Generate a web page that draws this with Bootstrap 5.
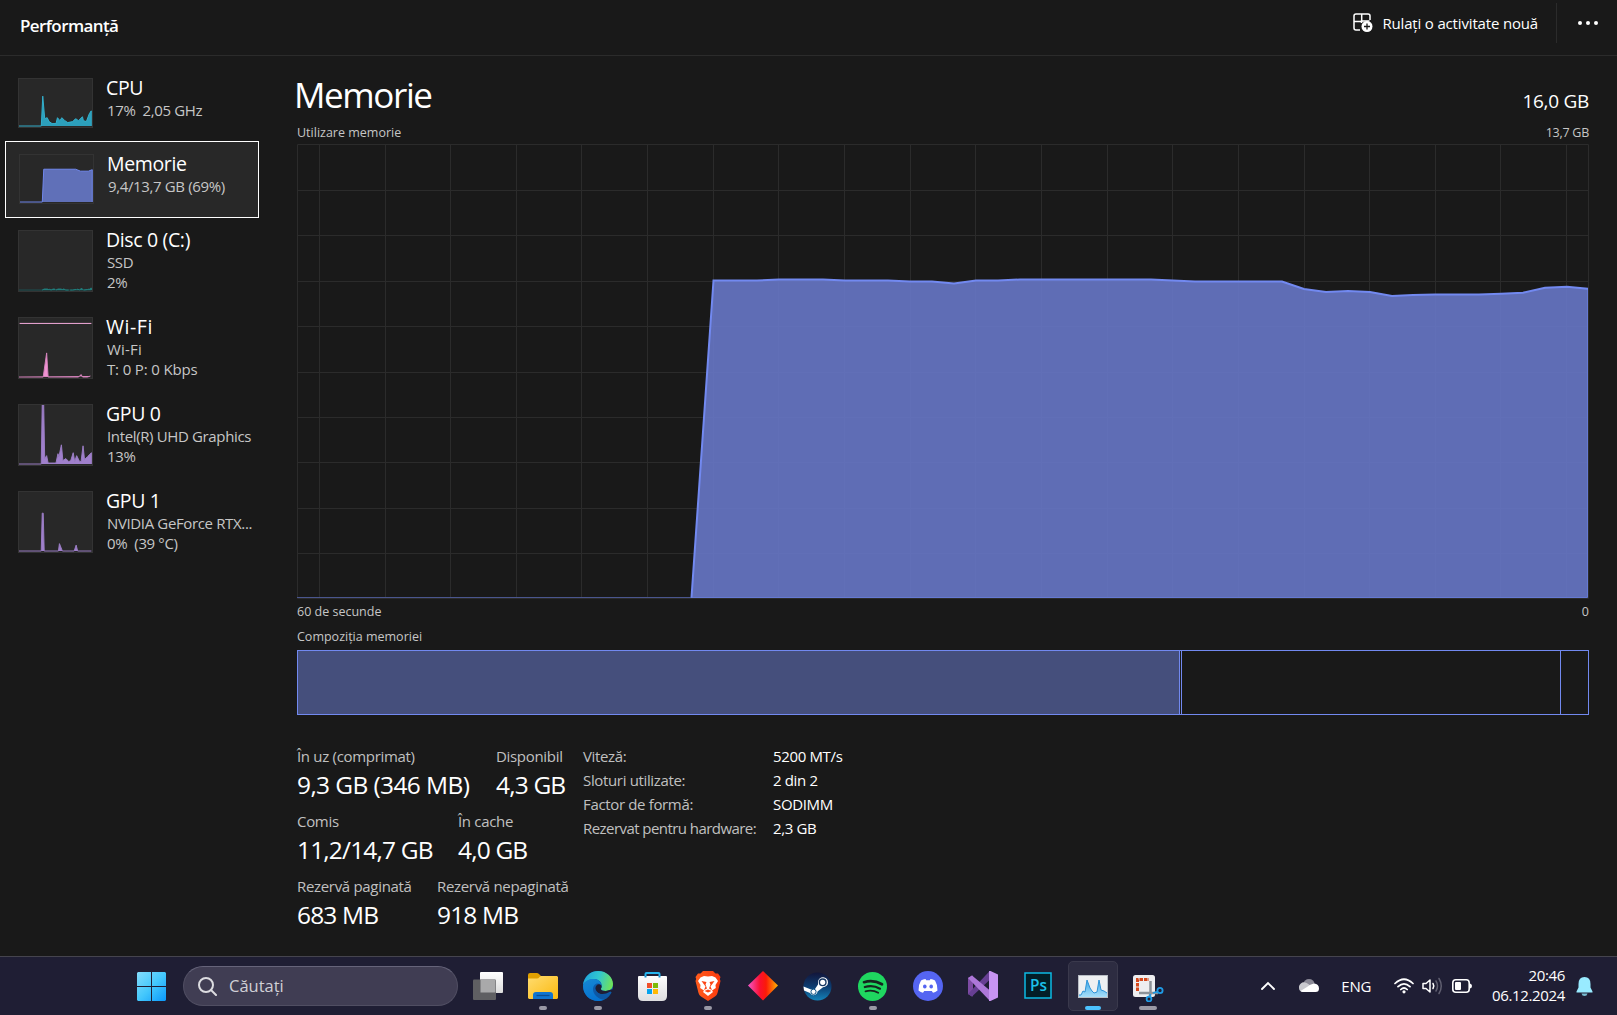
<!DOCTYPE html>
<html lang="ro" data-bs-theme="dark">
<head>
<meta charset="utf-8">
<meta name="viewport" content="width=device-width, initial-scale=1">
<title>Performanță</title>
<link href="https://cdn.jsdelivr.net/npm/bootstrap@5.3.0/dist/css/bootstrap.min.css" rel="stylesheet">
<style>
body{background:#191919;color:#fff;font-family:"Open Sans","Noto Sans",sans-serif;width:1617px;height:1015px;overflow:hidden}
svg{display:block;flex:none}
.topbar{height:56px;border-bottom:1px solid #2b2b2b;padding:0 18px 0 20px}
.page-name{font-size:17px;font-weight:600;line-height:24px;margin-top:-3px;letter-spacing:-.035em}
.run-btn{font-size:15px;line-height:22px;gap:9px;margin-top:-9px;margin-right:18px;letter-spacing:-.011em}
.vline{width:1px;height:40px;background:#2b2b2b;margin-top:-9px}
.dots{margin:-9px 0 0 20px}
.side{width:264px;padding:9px 0 0 5px}
.res{width:254px;height:76px;padding:13px 0 0 13px;gap:13px}
.res.tall{height:87px}
.res.sel{height:77px;margin-bottom:-1px;background:#282828;border:1px solid #fff;padding:12px 0 0 13px}
.res-name{font-size:19.5px;line-height:24px;margin-top:-2px;letter-spacing:-.018em}
.res-sub{font-size:15px;line-height:20px;color:#c6c6c6;padding:0 0 0 1px;letter-spacing:-.024em}
.wider{letter-spacing:.028em}
.res-sub .wider{letter-spacing:.012em}
.res-sub .mid{letter-spacing:-.01em}
.thumb{background:#282828;border:1px solid #333}
.main-pane{width:1292px;margin-left:33px}
.h-title{font-size:35px;line-height:44px;margin:17px 0 0 -3px;letter-spacing:-.04em}
.h-total{font-size:19px;line-height:26px;margin-bottom:3px;letter-spacing:-.015em}
.cap{font-size:12.5px;line-height:18px;color:#c6c6c6}
.cap-top{margin:7px 0 2px}
.cap-time{margin-top:4px}
.cap-comp{margin:7px 0 4px}
.tight{letter-spacing:-.02em}
.comp{height:65px;border:1px solid #7289f0}
.comp>div{border-right:1px solid #7289f0}
.comp .in-use{background:#454f7c}
.stats{margin-top:31px}
.stats-left{width:286px}
.lbl{font-size:15px;line-height:20px;color:#c0c0c0;letter-spacing:-.021em}
.val{font-size:24.5px;line-height:32px;padding-top:3px;letter-spacing:-.034em;white-space:nowrap}
.val.first{letter-spacing:-.025em}
.stat-row{height:65px}
.c1{width:199px}.c2{width:161px}.c3{width:140px}
.facts{font-size:15px;line-height:24px;color:#c0c0c0;margin-top:-2px;letter-spacing:-.023em}
.facts-names{width:190px}
.hw{letter-spacing:-.037em}
.taskbar{height:59px;background:#1f1e34;border-top:1px solid #45444e;padding:0 24px 0 126px}
.slot{width:50px;height:50px;border-radius:5px;margin-right:5px;position:relative;display:flex;align-items:center;justify-content:center;flex:none;border:1px solid transparent}
.slot.on{background:#2d2c41;border-color:#3a394c}
.slot.run::after{content:"";position:absolute;left:20px;bottom:0;width:8px;height:4px;border-radius:2px;background:#9a99a5}
.slot.on::after{left:16px;width:16px;background:#4cc2ff}
.slot.wide::after{left:15px;width:18px}
.search{width:275px;height:40px;border-radius:20px;background:#403d53;border:1px solid #504e62;border-top-color:#66647a;margin:0 5px 0 2px;padding-left:14px;gap:12px;font-size:16.5px;color:#d0d0d6}
.search span{padding-top:1px}
.ps-text{font-family:"Open Sans",sans-serif;font-size:16.5px;font-weight:600}
.lang{font-size:15px;margin:0 23px 0 22px;letter-spacing:-.02em}
.clock{font-size:15px;line-height:20px;width:74px;margin:-2px 11px 0 19px;letter-spacing:-.023em}
</style>
<script src="https://cdn.jsdelivr.net/npm/bootstrap@5.3.0/dist/js/bootstrap.bundle.min.js"></script>
</head>
<body class="d-flex flex-column">
<header class="topbar d-flex align-items-center">
  <div class="page-name me-auto">Performanță</div>
  <div class="run-btn d-flex align-items-center">
    <svg width="20" height="20" viewBox="0 0 20 20" fill="none" stroke="#fff" stroke-width="1.500"><path d="M7 17H3A2 2 0 0 1 1 15V3A2 2 0 0 1 3 1H15A2 2 0 0 1 17 3V7M1 8.500H9.500M8.700 1V8M16.500 8H8.500V10"/><circle cx="14" cy="13.500" r="5.500" fill="#fff" stroke="none"/><path d="M14 10.500V16.500M11 13.500H17" stroke="#191919" stroke-width="1.300"/></svg>
    <span>Rulați o activitate nouă</span>
  </div>
  <div class="vline"></div>
  <svg class="dots" width="22" height="6" fill="#fff"><circle cx="3" cy="3" r="2"/><circle cx="11" cy="3" r="2"/><circle cx="19" cy="3" r="2"/></svg>
</header>

<div class="d-flex flex-grow-1">
<aside class="side">
  <div class="res d-flex align-items-start">
    <svg class="thumb" width="75" height="50" viewBox="0.500 0.500 74 49"><path d="M0 48.500H23L24.500 18L26.500 41L29 40L31 44L34 46H38L39.500 40L42 43L44 40L47 43L50 45L55 44L58 41L61 43L65 39L66 43L69 44L72 36L74 33V48.500" fill="#2c9fbb" stroke="#33b1cf"/></svg>
    <div><div class="res-name">CPU</div><div class="res-sub">17%&nbsp; 2,05 GHz</div></div>
  </div>
  <div class="res sel d-flex align-items-start">
    <svg class="thumb" width="75" height="50" viewBox="0.500 0.500 74 49"><path d="M0 48.500H23L24.500 15H57L62 17L70 17L74 15.500V48.500" fill="#6070b8" stroke="#7289f0"/></svg>
    <div><div class="res-name">Memorie</div><div class="res-sub">9,4/13,7 GB (69%)</div></div>
  </div>
  <div class="res tall d-flex align-items-start">
    <svg class="thumb" width="75" height="62" viewBox="0.500 0.500 74 61"><path d="M0 60.500H74" stroke="#1d5253"/><path d="M24 60.500L26 59.500H31L33 60.500L35 59.500H37L38 60.500L40 59.500H46L48 60.500H55L60 59.500L62 60.500L64 58.500L66 60.500L70 60L74 58.500V60.500" fill="#1f7a7a" stroke="#23807d" stroke-dasharray="6 1.500"/></svg>
    <div><div class="res-name">Disc 0 (C:)</div><div class="res-sub">SSD<br>2%</div></div>
  </div>
  <div class="res tall d-flex align-items-start">
    <svg class="thumb" width="75" height="62" viewBox="0.500 0.500 74 61"><path d="M1 6H74" stroke="#f9aee0"/><path d="M0 60.500H25L28.500 36L30 60.500H61L63.500 58L65 60.500H70L73 59.500" fill="#f092d2" stroke="#d584bd"/></svg>
    <div><div class="res-name wider">Wi-Fi</div><div class="res-sub"><span class="wider">Wi-Fi</span><br><span class="mid">T: 0 P: 0 Kbps</span></div></div>
  </div>
  <div class="res tall d-flex align-items-start">
    <svg class="thumb" width="75" height="62" viewBox="0.500 0.500 74 61"><path d="M0 60.500H23L24 0H25.500L26.500 55L28.500 52L30 59.500H38L40 50L41 53L43.500 41L45 57L48 55L51 58L53 57L55.500 49L57 58L59 52L62 58L63.500 58L65.500 42L67 56L70 53L74 49V60.500" fill="#a080cc" stroke="#9a7cc4"/></svg>
    <div><div class="res-name">GPU 0</div><div class="res-sub text-nowrap">Intel(R) UHD Graphics<br>13%</div></div>
  </div>
  <div class="res tall d-flex align-items-start">
    <svg class="thumb" width="75" height="62" viewBox="0.500 0.500 74 61"><path d="M0 60.500H23L24 22H25L26 60.500H40.500L41.500 53L44.500 60.500H56.500L58.500 54.500L60 60.500H74" fill="#a080cc" stroke="#9a7cc4"/></svg>
    <div><div class="res-name">GPU 1</div><div class="res-sub text-nowrap">NVIDIA GeForce RTX...<br>0%&nbsp; (39 °C)</div></div>
  </div>
</aside>

<main class="main-pane">
  <div class="d-flex justify-content-between align-items-end">
    <div class="h-title">Memorie</div>
    <div class="h-total">16,0 GB</div>
  </div>
  <div class="cap cap-top d-flex justify-content-between"><span>Utilizare memorie</span><span class="tight">13,7 GB</span></div>
  <svg width="1292" height="455" fill="none">
    <path stroke="#2b2b2b" d="M.5.5H1291.500V454.500H.5ZM22.500 0V454M88.500 0V454M153.500 0V454M219.500 0V454M284.500 0V454M350.500 0V454M416.500 0V454M481.500 0V454M547.500 0V454M613.500 0V454M678.500 0V454M744.500 0V454M810.500 0V454M875.500 0V454M941.500 0V454M1007.500 0V454M1072.500 0V454M1138.500 0V454M1203.500 0V454M1269.500 0V454M0 46.500H1291M0 91.500H1291M0 137.500H1291M0 182.500H1291M0 228.500H1291M0 273.500H1291M0 318.500H1291M0 364.500H1291M0 409.500H1291"/>
    <path fill="#6777c7" fill-opacity=".9" d="M394.500 453.500L416.500 136.500H460L482 135.500H526L548 136.500H591L613 137.500H635L657 139.500L679 136.500H701L723 135.500H854L876 136.500L898 137.500H985L1007 145L1029 148L1051 147L1073 148L1095 152L1116 151L1138 150.500H1182L1204 149.700L1226 148.700L1248 143.700L1270 142.700L1290.500 144.700V453.500Z"/>
    <path stroke="#4a568e" d="M0 453.500H394"/><path stroke="#667ad2" d="M394 453.500H1290.500V145"/>
    <path stroke="#7289f0" stroke-width="2" d="M394.500 453.500L416.500 136.500H460L482 135.500H526L548 136.500H591L613 137.500H635L657 139.500L679 136.500H701L723 135.500H854L876 136.500L898 137.500H985L1007 145L1029 148L1051 147L1073 148L1095 152L1116 151L1138 150.500H1182L1204 149.700L1226 148.700L1248 143.700L1270 142.700L1291 144.700"/>
  </svg>
  <div class="cap cap-time d-flex justify-content-between"><span>60 de secunde</span><span>0</span></div>
  <div class="cap cap-comp">Compoziția memoriei</div>
  <div class="comp d-flex"><div class="in-use" style="width:882px"></div><div style="width:2px"></div><div style="width:379px"></div></div>
  <section class="stats d-flex">
    <div class="stats-left">
      <div class="stat-row d-flex"><div class="c1"><div class="lbl">În uz (comprimat)</div><div class="val first">9,3 GB (346 MB)</div></div><div><div class="lbl">Disponibil</div><div class="val">4,3 GB</div></div></div>
      <div class="stat-row d-flex"><div class="c2"><div class="lbl">Comis</div><div class="val">11,2/14,7 GB</div></div><div><div class="lbl">În cache</div><div class="val">4,0 GB</div></div></div>
      <div class="stat-row d-flex"><div class="c3"><div class="lbl">Rezervă paginată</div><div class="val">683 MB</div></div><div><div class="lbl text-nowrap">Rezervă nepaginată</div><div class="val">918 MB</div></div></div>
    </div>
    <div class="facts d-flex">
      <div class="facts-names">Viteză:<br>Sloturi utilizate:<br>Factor de formă:<br><span class="hw">Rezervat pentru hardware:</span></div>
      <div class="text-white">5200 MT/s<br>2 din 2<br>SODIMM<br>2,3 GB</div>
    </div>
  </section>
</main>
</div>

<footer class="taskbar d-flex align-items-center">
  <div class="slot">
    <svg width="29" height="29"><defs><linearGradient id="win" gradientUnits="userSpaceOnUse" x1="0" y1="0" x2="29" y2="29"><stop stop-color="#84dcfb"/><stop offset=".5" stop-color="#45c8fc"/><stop offset="1" stop-color="#0a98fb"/></linearGradient></defs><path fill="url(#win)" d="M1 0H14V14H0V1ZM15 0H28L29 1V14H15ZM0 15H14V29H1L0 28ZM15 15H29V28L28 29H15Z"/></svg>
  </div>
  <div class="search d-flex align-items-center">
    <svg width="19" height="19" fill="none" stroke="#dcdce0" stroke-width="2"><circle cx="8" cy="8" r="7"/><path d="M13 13L18 18" stroke-linecap="round"/></svg>
    <span>Căutați</span>
  </div>
  <!-- task view -->
  <div class="slot">
    <svg width="30" height="28"><defs><linearGradient id="tv" x1="0" y1="0" x2="0" y2="1"><stop stop-color="#fff"/><stop offset="1" stop-color="#dcdcdc"/></linearGradient></defs><rect x="7" width="23" height="21" rx="1" fill="url(#tv)"/><rect y="7.500" width="23" height="20.500" rx="1" fill="#5f5f62"/><rect x="7.500" y="8" width="15" height="12.500" fill="#a9a9aa"/></svg>
  </div>
  <!-- file explorer -->
  <div class="slot run">
    <svg width="30" height="30"><defs><linearGradient id="fo" x1="0" y1="0" x2="1" y2="1"><stop stop-color="#ffdc70"/><stop offset="1" stop-color="#fbb90f"/></linearGradient></defs><path d="M0 4Q0 2 2 2H9Q10.500 2 11.500 3.500L13 5V9H0Z" fill="#e0a000"/><path d="M0 7.500H9Q10.500 7.500 11.500 6L13 5H29L30 6V27L29 28H1L0 27Z" fill="url(#fo)"/><path d="M5 28V24Q5 21 8 21H22Q25 21 25 24V28Z" fill="#0f74cf"/><path d="M8.500 24.500H21.500" stroke="#0b4d91" stroke-width="1.300"/></svg>
  </div>
  <!-- edge -->
  <div class="slot run">
    <svg width="30" height="30" viewBox="0 0 30 30"><defs><linearGradient id="ed1" x1="0" y1=".3" x2="1" y2=".5"><stop stop-color="#1fa3dc"/><stop offset=".5" stop-color="#31c6d0"/><stop offset="1" stop-color="#6fe35a"/></linearGradient><linearGradient id="ed2" x1="0" y1="0" x2=".4" y2="1"><stop stop-color="#1788d4"/><stop offset="1" stop-color="#0673d0"/></linearGradient></defs><circle cx="15" cy="15" r="15" fill="#0d5aa9"/><path d="M0 14C1 6 7 0 15 0C24 0 30 6.500 30 13C30 18 26.500 20 22.500 20C19 20 17.500 18.800 18 17.500C20 14 18 9 12 8C6 8 1.500 11 0 14Z" fill="url(#ed1)"/><path d="M0 14.500C1.500 10 6 7.600 11 8C16 8.500 18.500 12 18 14C14 10.500 10 14 10 18C10 24 15 28 21.500 28.500C19.500 29.600 17 30 15 30C6.500 30 0 23.500 0 14.500Z" fill="url(#ed2)"/><path d="M18 14C15 12 12 15 12.500 18C13.500 23 20 25 27.500 20.500L29.500 22L31 18L22.500 20C19 20 17.500 18.800 18 17.500C19 16 18.600 15 18 14Z" fill="#1f1e34"/><path d="M12.500 18C13.500 23 20 25 28 21.500C26 25.500 23.500 27.700 21 28.600C15 28 10.500 23 12.500 18Z" fill="#0d57a3"/></svg>
  </div>
  <!-- store -->
  <div class="slot">
    <svg width="30" height="30"><defs><linearGradient id="st" x1="0" y1="0" x2="0" y2="1"><stop stop-color="#fdfdfd"/><stop offset="1" stop-color="#dedee0"/></linearGradient></defs><path d="M7.500 7V3Q7.500 2 8.500 2H20.500Q21.500 2 21.500 3V7" fill="none" stroke="#25b4ee" stroke-width="2"/><path d="M1 5H28Q29 5 29 6V25Q29 30 24 30H5Q0 30 0 25V6Q0 5 1 5Z" fill="url(#st)"/><path d="M7.500 5V6.500M21.500 5V6.500" stroke="#168ed0" stroke-width="2"/><path d="M9 12H14V17H9Z" fill="#f0502a"/><path d="M15 12H20V17H15Z" fill="#7dba08"/><path d="M9 18H14V23H9Z" fill="#06a3ee"/><path d="M15 18H20V23H15Z" fill="#ffb905"/></svg>
  </div>
  <!-- brave -->
  <div class="slot run">
    <svg width="26" height="30" viewBox="0 0 26 30"><defs><linearGradient id="br"><stop stop-color="#ff5b1c"/><stop offset="1" stop-color="#fb3a0e"/></linearGradient></defs><path d="M8 0H18L20.500 2.500L23 2.500L25.500 6L24.800 8L25.500 10L22.500 22Q22 24 20 25.500L13 30L6 25.500Q4 24 3.500 22L.5 10L1.200 8L.5 6L3 2.500L5.500 2.500Z" fill="url(#br)"/><path d="M13 5.500L17 5L20.500 6.500L23 10L20.500 14L20.800 17L17 19.500L18 21L13 25L8 21L9 19.500L5.200 17L5.500 14L3 10L5.500 6.500L9 5Z" fill="#fff"/><path d="M6.500 10L11.500 11L10.500 13.500L12 17.500L9 19L10.500 15.500ZM19.500 10L14.500 11L15.500 13.500L14 17.500L17 19L15.500 15.500ZM9.500 20L13 18.500L16.500 20L13 21.500Z" fill="#fb4516"/></svg>
  </div>
  <!-- diamond -->
  <div class="slot">
    <svg width="30" height="30"><defs><linearGradient id="di"><stop stop-color="#f557c8"/><stop offset=".4" stop-color="#fa1030"/><stop offset=".6" stop-color="#fb1a08"/><stop offset="1" stop-color="#ffb400"/></linearGradient></defs><path d="M15 0L30 14.500L15 29.500L0 14.500Z" fill="url(#di)"/></svg>
  </div>
  <!-- steam -->
  <div class="slot">
    <svg width="30" height="29" viewBox="0 0 30 29"><defs><linearGradient id="sm" x1="0" y1="0" x2="0" y2="1"><stop stop-color="#12153a"/><stop offset=".5" stop-color="#0d3c70"/><stop offset="1" stop-color="#1583b9"/></linearGradient></defs><circle cx="14.500" cy="14.500" r="14" fill="url(#sm)"/><path d="M.5 14.500L8 17.500L12 17L15 12.500V10A5 5 0 1 1 20 15.300L14.500 19.500A4 4 0 0 1 7 21L1 18.500Z" fill="#fff"/><circle cx="19.700" cy="10.300" r="3.300" fill="#fff" stroke="#173762" stroke-width="1.400"/><circle cx="10.500" cy="19.800" r="2.600" fill="none" stroke="#145585" stroke-width="1"/></svg>
  </div>
  <!-- spotify -->
  <div class="slot run">
    <svg width="30" height="29" viewBox="0 0 30 29" fill="none" stroke="#16251f" stroke-linecap="round"><circle cx="14.500" cy="14.500" r="14.500" fill="#1fd760" stroke="none"/><path d="M6 10.200Q15.500 7.500 24 12.300" stroke-width="2.700"/><path d="M6.800 15Q15 12.500 22 16.700" stroke-width="2.200"/><path d="M7.500 19.300Q14.500 17.500 20.200 20.800" stroke-width="1.800"/></svg>
  </div>
  <!-- discord -->
  <div class="slot">
    <svg width="30" height="30" viewBox="0 0 30 30"><circle cx="15" cy="15" r="15" fill="#5565f2"/><path d="M8 9.500Q10 8.200 12.500 8L13.200 9.300H16.800L17.500 8Q20 8.200 22 9.500Q24.800 14 24.500 19.500Q22.300 21.300 20 21.800L18.800 20H11.200L10 21.800Q7.700 21.300 5.500 19.500Q5.200 14 8 9.500Z" fill="#fff"/><ellipse cx="11.800" cy="15.600" rx="1.800" ry="2" fill="#5565f2"/><ellipse cx="18.200" cy="15.600" rx="1.800" ry="2" fill="#5565f2"/></svg>
  </div>
  <!-- visual studio -->
  <div class="slot">
    <svg width="30" height="30" viewBox="0 0 30 30"><path d="M0 7L4 4.500L5 5V25L4 25.500L0 23Z" fill="#7d4ba3"/><path d="M5 10V20L9.500 15Z" fill="#1f1e34"/><path d="M4 25.500L0 23L21 .8V9.500L5 24.500Z" fill="#673f93"/><path d="M0 7L4 4.500L22 19.500V30Z" fill="#ad77d8"/><path d="M21 0H22.500L30 3.500V26.500L22.500 30H21Z" fill="#c794f2"/></svg>
  </div>
  <!-- photoshop -->
  <div class="slot">
    <svg width="28" height="30"><rect x="1" y="2" width="26" height="25" fill="#031e27" stroke="#0cbbe4" stroke-width="1.500"/><text class="ps-text" x="6" y="19.500" fill="#1cc1ea" textLength="17" lengthAdjust="spacingAndGlyphs">Ps</text></svg>
  </div>
  <!-- task manager -->
  <div class="slot on run">
    <svg width="30" height="23"><defs><linearGradient id="tm" x1="0" y1="0" x2="0" y2="1"><stop stop-color="#3ba9e8"/><stop offset="1" stop-color="#a8defa"/></linearGradient></defs><rect x=".5" y=".5" width="29" height="22" fill="#eef0f2" stroke="#b9bec5"/><path d="M1 20L3 20L5 16L7 17L9 5L12 13L14 16L16 18L19 17L21 5L23 15L26 16L29 18V22H1Z" fill="url(#tm)"/><path d="M1 20L3 20L5 16L7 17L9 5L12 13L14 16L16 18L19 17L21 5L23 15L26 16L29 18" fill="none" stroke="#2f93d8"/></svg>
  </div>
  <!-- snipping tool -->
  <div class="slot run wide">
    <svg width="32" height="32" viewBox="0 0 32 32"><rect x="1" y="5" width="22" height="22" rx="2.500" fill="#eeeef0"/><path d="M5.500 21V9.500H17" fill="none" stroke="#d6481b" stroke-width="3" stroke-dasharray="3.500 1"/><path d="M18.500 11V23L17.500 28M7 23H26" stroke="#8d9298" stroke-width="2.500" fill="none"/><path d="M18.500 24L17.500 28M21 23L26 21.500" stroke="#1f9be6" stroke-width="1.800"/><circle cx="28" cy="20.500" r="2.600" fill="none" stroke="#1f9be6" stroke-width="1.800"/><circle cx="17" cy="29" r="2.400" fill="#1f1e34" stroke="#1f9be6" stroke-width="1.800"/></svg>
  </div>

  <svg class="ms-auto" width="14" height="10" fill="none" stroke="#fff" stroke-width="1.900" stroke-linecap="round"><path d="M1 8L7 2L13 8"/></svg>
  <svg class="ms-4" width="20" height="14" viewBox="0 0 20 14"><path d="M4.500 5A5.500 5 0 0 1 15.500 5L10 10Z" fill="#8b8a97"/><path d="M0 9A5 5 0 0 1 6 3.500Q9 4 13 8L5 13Q0 13 0 9Z" fill="#c9c9cf"/><path d="M1.500 12L8 8Q11 5 15 4.500Q20 5 20 9.500Q20 13 16.500 13H4Q2.500 13 1.500 12Z" fill="#fff"/></svg>
  <span class="lang">ENG</span>
  <svg width="20" height="16" viewBox="0 0 20 16" fill="none" stroke="#fff" stroke-width="1.700" stroke-linecap="round"><path d="M1 5.500Q10-3 19 5.500M4 8.700Q10 3 16 8.700M6.800 11.500Q10 8.500 13.200 11.500"/><circle cx="10" cy="13.800" r="1.600" fill="#fff" stroke="none"/></svg>
  <svg class="ms-2" width="21" height="18" viewBox="0 0 21 18" fill="none" stroke="#fff" stroke-width="1.500" stroke-linejoin="round" stroke-linecap="round"><path d="M1 6.500H4L8 3V15L4 11.500H1Z"/><path d="M11 6.500Q12.600 9 11 11.500"/><path d="M14 4Q17 9 14 14M17 1.500Q21.500 9 17 16.500" stroke="#605f70"/></svg>
  <svg class="ms-2" width="21" height="14" viewBox="-1 0 21 14"><rect x=".8" y=".8" width="16.400" height="12.400" rx="3" fill="none" stroke="#fff" stroke-width="1.600"/><rect x="3" y="3" width="6" height="8" rx="1" fill="#fff"/><path d="M18 4.500Q20 5 20 7T18 9.500Z" fill="#fff"/></svg>
  <div class="clock text-end">20:46<br>06.12.2024</div>
  <svg width="17" height="19" viewBox="0 0 17 19" fill="#99ebff"><path d="M8.500 0Q14.500 0 14.500 7V10.500L16.500 14.500V15.500H.5V14.500L2.500 10.500V7Q2.500 0 8.500 0Z"/><path d="M5.500 16.500H11.500Q11 19 8.500 19T5.500 16.500Z" fill="#78bcd0"/></svg>
</footer>
</body>
</html>
